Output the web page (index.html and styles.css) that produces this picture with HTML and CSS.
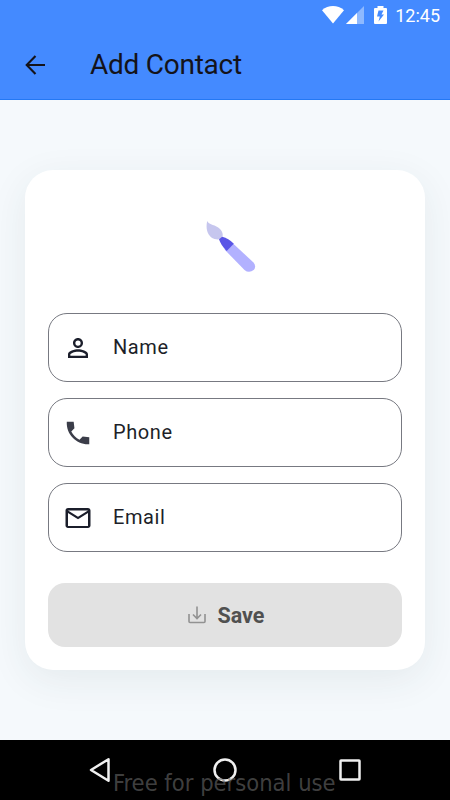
FILE: index.html
```html
<!DOCTYPE html>
<html lang="en">
<head>
<meta charset="utf-8">
<title>Add Contact</title>
<link rel="stylesheet" href="styles.css">
</head>
<body>
<div class="screen">
  <header class="header">
    <div class="status">
      <svg class="wifi" width="22" height="18" viewBox="0 0 22 18"><path d="M0 4.200C6.300-1.400 15.700-1.400 22 4.200L11 17.500Z" fill="#fff"/></svg>
      <svg class="signal" width="18" height="18" viewBox="0 0 18 18"><path d="M0 18 18 0V18Z" fill="#fff" opacity=".4"/><path d="M0 18 11 7V18Z" fill="#fff"/></svg>
      <svg class="battery" width="13" height="18" viewBox="0 0 13 18"><path fill="#fff" fill-rule="evenodd" d="M3.500 0h6v2H12q1 0 1 1v14q0 1-1 1H1q-1 0-1-1V3q0-1 1-1h2.500ZM4.500 4.500 3 10.500H5.800L4.500 15.500 10 8.500H7.500L9.500 4.500Z"/></svg>
      <span class="time">12:45</span>
    </div>
    <div class="toolbar">
      <svg class="back" width="30" height="30" viewBox="0 0 30 30" fill="none" stroke="#14131a" stroke-width="2.100"><path d="M25 15H7M15.500 5.900 6.700 15l8.800 9.100"/></svg>
      <h1 class="title">Add Contact</h1>
    </div>
  </header>
  <main class="content">
    <form class="card">
      <svg class="brush" width="50" height="52" viewBox="0 0 50 52">
        <path d="M1.200 0C3.500 4.300 9.500 3.500 14 8C16.800 11 17.300 13.800 16.200 16.500C15 18.500 12 18.800 8.500 18C2 15.800-.8 8.500 1.200 0Z" fill="#c6c6ee"/>
        <path d="M26.500 22 47.500 41.500Q50.500 45 48 48.800Q43 52.800 38.500 49L18.500 28.500Z" fill="#b2b1ff"/>
        <path d="M16.200 15.800Q22.500 17.500 27.800 22.800L20.700 30Q15 24.500 13 18.300Z" fill="#5a55e6"/>
      </svg>
      <label class="field">
        <svg class="icon" width="30" height="30" viewBox="0 0 24 24"><path d="M12 5.900a2.100 2.100 0 1 1 0 4.200 2.100 2.100 0 0 1 0-4.200m0 9c2.970 0 6.100 1.460 6.100 2.100v1.100H5.900V17c0-.64 3.130-2.100 6.100-2.100M12 4C9.790 4 8 5.790 8 8s1.790 4 4 4 4-1.790 4-4-1.790-4-4-4m0 9c-2.670 0-8 1.340-8 4v3h16v-3c0-2.660-5.330-4-8-4"/></svg>
        <span>Name</span>
      </label>
      <label class="field">
        <svg class="icon phone" width="30" height="30" viewBox="0 0 24 24"><path d="M21 15.460l-5.270-.61-2.520 2.520c-2.830-1.440-5.150-3.750-6.590-6.590l2.530-2.530L8.540 3H3.030C2.450 13.180 10.820 21.550 21 20.970z"/></svg>
        <span>Phone</span>
      </label>
      <label class="field">
        <svg class="icon" width="30" height="30" viewBox="0 0 24 24"><path d="M20 4H4c-1.100 0-1.990.9-1.990 2L2 18c0 1.100.9 2 2 2h16c1.100 0 2-.9 2-2V6c0-1.100-.9-2-2-2m0 14.300H4V8l8 5 8-5zm-8-7.300L4 6h16z"/></svg>
        <span>Email</span>
      </label>
      <button class="save" type="button">
        <svg width="18" height="18" viewBox="0 0 18 18" fill="none" stroke="#929292" stroke-width="1.600"><path d="M1 8v7.500q0 1 1 1h14q1 0 1-1V8M9 .5v11.800M5 8.500l4 4 4-4"/></svg>
        <span>Save</span>
      </button>
    </form>
  </main>
  <nav class="navbar">
    <svg width="22" height="26" viewBox="0 0 22 26"><path d="M19.500 2.200v21.600L2 13Z"/></svg>
    <svg width="24" height="24" viewBox="0 0 24 24"><circle cx="12" cy="12" r="10.500"/></svg>
    <svg width="22" height="22" viewBox="0 0 22 22"><rect x="1.500" y="1.500" width="19" height="19" rx=".5"/></svg>
    <span class="watermark">Free for personal use</span>
  </nav>
</div>
</body>
</html>
```

FILE: styles.css
```css
* { box-sizing: border-box; }
body { margin: 0; font-family: Roboto, "Liberation Sans", sans-serif; }
svg { display: block; flex: none; }
.screen { width: 450px; height: 800px; display: flex; flex-direction: column; overflow: hidden; }
.header { height: 100px; flex: none; background: #448aff; border-bottom: 1px solid #2478f4; }
.status { height: 30px; display: flex; justify-content: flex-end; align-items: center; padding-right: 10px; color: #fff; }
.wifi { margin-right: 2.500px; }
.battery { margin: 0 8px 0 10px; }
.time { font-size: 18px; line-height: 30px; padding-top: 1px; }
.toolbar { height: 70px; display: flex; align-items: center; padding-left: 20px; }
.title { margin: 0 0 0 40px; font-size: 28px; line-height: 34px; font-weight: 400; letter-spacing: -.25px; color: #14131a; white-space: nowrap; }
.content { height: 640px; flex: none; background: #f5f9fc; padding: 70px 25px; }
.card { height: 500px; background: #fff; border-radius: 28px; padding: 51px 23px 23px; box-shadow: 0 10px 38px rgba(40, 60, 70, .08); display: flex; flex-direction: column; }
.brush { margin: 0 0 40px 158px; }
.field { height: 69px; flex: none; margin-bottom: 16px; border: 1px solid #777981; border-radius: 19px; display: flex; align-items: center; padding-left: 13.500px; color: #1d1f29; font-size: 20px; letter-spacing: .6px; }
.field span { margin-left: 20.500px; padding-bottom: 1px; }
.icon { fill: #1b1e2b; }
.phone { fill: #3b3d49; }
.save { height: 64px; flex: none; margin: 15px 0 0; padding: 0 0 0 2px; border: 0; border-radius: 17px; background: #e2e2e2; display: flex; align-items: center; justify-content: center; gap: 12px; font: 700 21.500px Roboto, sans-serif; color: #505050; }
.navbar { height: 60px; flex: none; background: #000; position: relative; display: flex; align-items: center; justify-content: space-between; padding: 0 89px; }
.navbar svg { fill: none; stroke: #f0f0f0; stroke-width: 2.500; stroke-linejoin: round; }
.watermark { position: absolute; left: 113px; top: 28px; font: 23.500px/30px "DejaVu Sans Condensed", "DejaVu Sans", sans-serif; color: rgba(105, 105, 105, .62); white-space: nowrap; }
```
